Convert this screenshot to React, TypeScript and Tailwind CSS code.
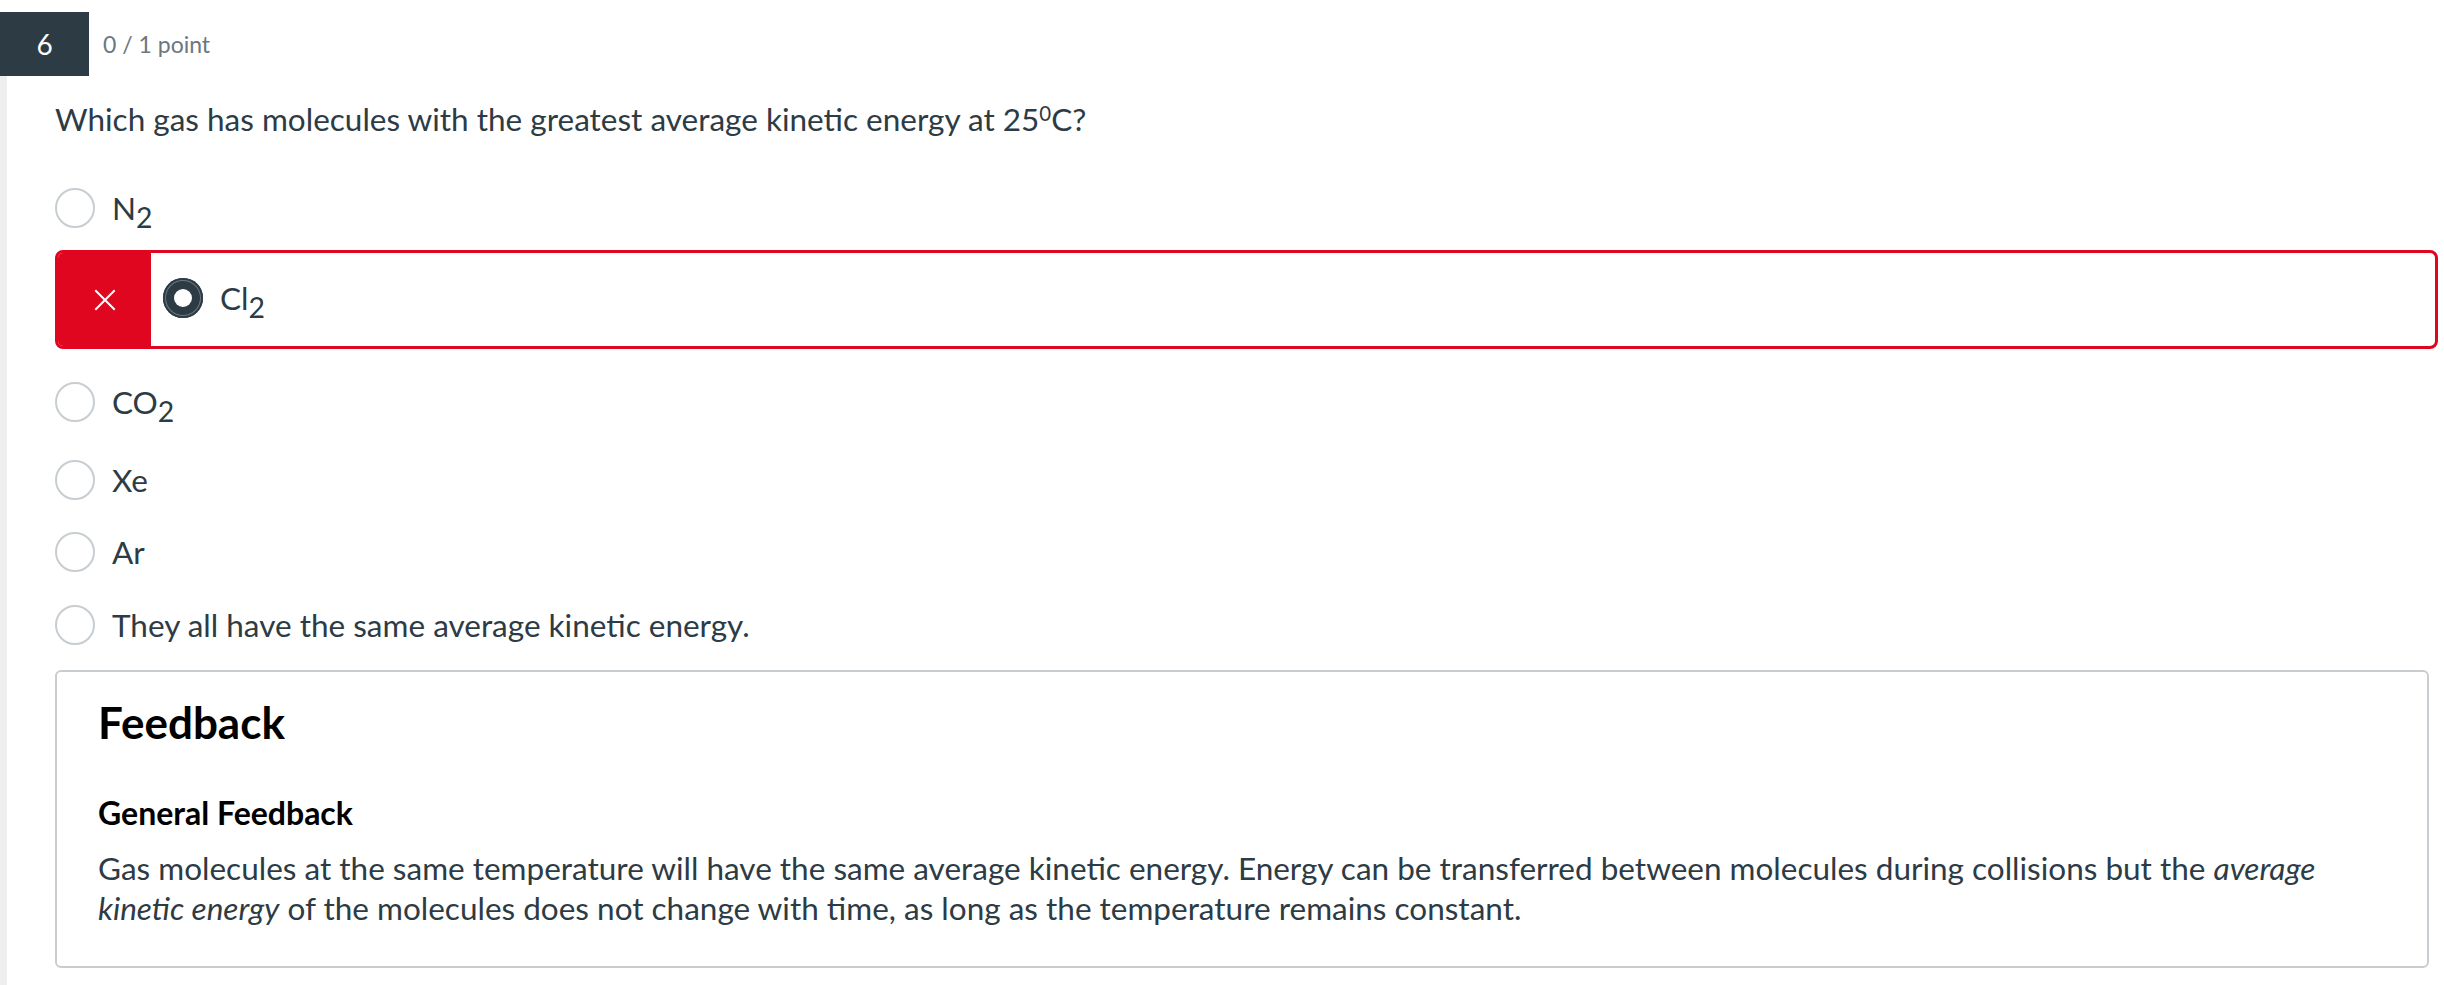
import type { ReactNode } from 'react';

const font = { fontFamily: 'Lato, "Noto Sans", sans-serif' };

function Sub({ children }: { children: ReactNode }) {
  return <sub className="relative -bottom-[0.28em] text-[0.9em] leading-none">{children}</sub>;
}

function Radio({ selected = false }: { selected?: boolean }) {
  if (selected) {
    return (
      <span className="flex h-[40px] w-[40px] shrink-0 items-center justify-center rounded-full bg-[#2d3b45] shadow-[inset_0_0_0_2px_#2d3b45,inset_0_0_0_3px_#6b7780]">
        <span className="h-[18px] w-[18px] rounded-full bg-white" />
      </span>
    );
  }
  return <span className="h-[40px] w-[40px] shrink-0 rounded-full border-2 border-[#c7cdd1] bg-white" />;
}

function Option({ label, className }: { label: ReactNode; className: string }) {
  return (
    <div className={`flex h-[56px] items-center gap-[17px] ${className}`}>
      <Radio />
      <span className="text-[31.5px] leading-[42px] text-[#2d3b45]">{label}</span>
    </div>
  );
}

function XIcon() {
  return (
    <svg width="22" height="22" viewBox="0 0 22 22" fill="none" stroke="white" strokeWidth="2" strokeLinecap="square">
      <path d="M2 2 20 20M20 2 2 20" />
    </svg>
  );
}

export default function App() {
  return (
    <div
      className="min-h-screen w-full bg-[linear-gradient(to_right,#eeeeee_7px,#ffffff_7px)] pb-8"
      style={font}
    >
      <div className="mt-[12px] flex h-[64px] items-center">
        <div className="flex h-full w-[89px] items-center justify-center bg-[#2d3b45] text-[28px] text-white">6</div>
        <span className="ml-[14px] text-[23px] text-[#6b7780]">0 / 1 point</span>
      </div>

      <p className="mt-[22px] pl-[55px] text-[31.5px] leading-[42px] text-[#2d3b45]">
        Which gas has molecules with the greatest average kinetic energy at 25
        <sup className="relative -top-[0.5em] text-[0.65em]">0</sup>C?
      </p>

      <div className="flex flex-col pl-[55px] pr-[6px]">
        <Option className="mt-[40px]" label={<>N<Sub>2</Sub></>} />

        <div className="mt-[14px] flex h-[99px] overflow-hidden rounded-[8px] border-[3px] border-[#e0061f]">
          <div className="flex w-[93px] items-center justify-center bg-[#e0061f]">
            <XIcon />
          </div>
          <div className="flex items-center gap-[17px] pl-[12px] pb-[3px]">
            <Radio selected />
            <span className="text-[31.5px] leading-[42px] text-[#2d3b45]">
              Cl<Sub>2</Sub>
            </span>
          </div>
        </div>

        <Option className="mt-[25px]" label={<>CO<Sub>2</Sub></>} />
        <Option className="mt-[22px]" label="Xe" />
        <Option className="mt-[16px]" label="Ar" />
        <Option className="mt-[17px]" label="They all have the same average kinetic energy." />
      </div>

      <div className="mt-[17px] ml-[55px] mr-[15px] rounded-[6px] border-2 border-[#c7cdd1] px-[41px] pt-[22px] pb-[38px]">
        <h2 className="text-[44px] font-bold leading-[57px] text-black">Feedback</h2>
        <h3 className="mt-[39px] text-[32px] font-bold leading-[45px] text-black">General Feedback</h3>
        <p className="mt-[13px] text-[31.5px] leading-[40px] text-[#2d3b45]">
          Gas molecules at the same temperature will have the same average kinetic energy. Energy can be transferred
          between molecules during collisions but the <em>average kinetic energy</em> of the molecules does not change
          with time, as long as the temperature remains constant.
        </p>
      </div>
    </div>
  );
}
